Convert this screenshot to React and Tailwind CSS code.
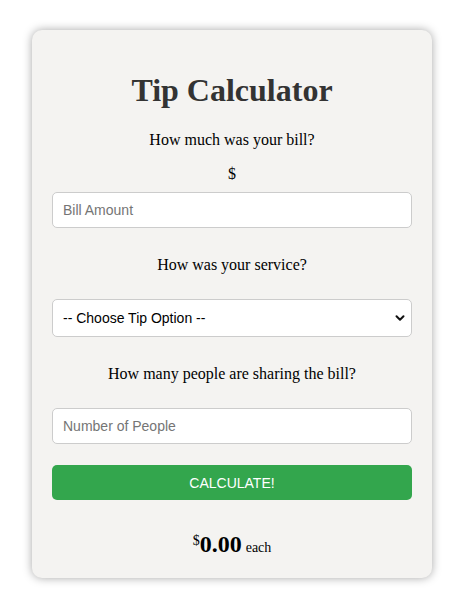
import React, { useState } from 'react';

const App = () => {
  const [bill, setBill] = useState('');
  const [tip, setTip] = useState('');
  const [people, setPeople] = useState('');
  const [each, setEach] = useState('0.00');

  const calculate = () => {
    const b = parseFloat(bill) || 0;
    const t = parseFloat(tip) || 0;
    const p = parseInt(people) || 1;
    setEach(((b * t) / p).toFixed(2));
  };

  return (
    <div className="min-h-[608px] bg-white pt-[30px] font-['Liberation_Serif',serif]">
      <div className="ml-[32px] w-[400px] rounded-[10px] bg-[#f4f3f1] px-5 pt-[42px] pb-[20px] text-center shadow-[0_0_10px_rgba(0,0,0,0.35)]">
        <h1 className="text-[32px] leading-[37px] font-bold text-[#333]">Tip Calculator</h1>

        <p className="mt-[22px] text-base leading-[18px] text-black">How much was your bill?</p>
        <p className="mt-4 text-base leading-[18px] text-black">$</p>
        <input
          type="text"
          value={bill}
          onChange={(e) => setBill(e.target.value)}
          placeholder="Bill Amount"
          className="mt-[9px] block h-9 w-full rounded-[5px] border border-[#ccc] bg-white px-[10px] font-['Liberation_Sans',sans-serif] text-sm text-black placeholder:text-[#757575] outline-none"
        />

        <p className="mt-7 text-base leading-[18px] text-black">How was your service?</p>
        <div className="relative mt-[25px]">
          <select
            value={tip}
            onChange={(e) => setTip(e.target.value)}
            className="block h-[38px] w-full appearance-none rounded-[5px] border border-[#ccc] bg-white px-[10px] font-['Liberation_Sans',sans-serif] text-sm text-black outline-none"
          >
            <option value="">-- Choose Tip Option --</option>
            <option value="0.3">30% - Outstanding</option>
            <option value="0.2">20% - Good</option>
            <option value="0.15">15% - It was OK</option>
            <option value="0.1">10% - Bad</option>
            <option value="0.05">5% - Terrible</option>
          </select>
          <svg
            className="pointer-events-none absolute right-[7px] top-[15px]"
            width="10"
            height="8"
            viewBox="0 0 10 8"
            fill="none"
          >
            <path d="M1.5 2.2 L5 5.7 L8.5 2.2" stroke="#111" strokeWidth="2" strokeLinecap="round" strokeLinejoin="round" />
          </svg>
        </div>

        <p className="mt-[28px] text-base leading-[18px] text-black">How many people are sharing the bill?</p>
        <input
          type="text"
          value={people}
          onChange={(e) => setPeople(e.target.value)}
          placeholder="Number of People"
          className="mt-[25px] block h-9 w-full rounded-[5px] border border-[#ccc] bg-white px-[10px] font-['Liberation_Sans',sans-serif] text-sm text-black placeholder:text-[#757575] outline-none"
        />

        <button
          onClick={calculate}
          className="mt-[21px] block h-[35px] w-full rounded-[5px] bg-[#33a64d] font-['Liberation_Sans',sans-serif] text-sm text-white uppercase"
        >
          Calculate!
        </button>

        <div className="mt-[30px] flex items-baseline justify-center text-black">
          <sup className="text-sm">$</sup>
          <span className="text-[24px] leading-[28px] font-bold">{each}</span>
          <span className="ml-1 text-sm">each</span>
        </div>
      </div>
    </div>
  );
};

export default App;
